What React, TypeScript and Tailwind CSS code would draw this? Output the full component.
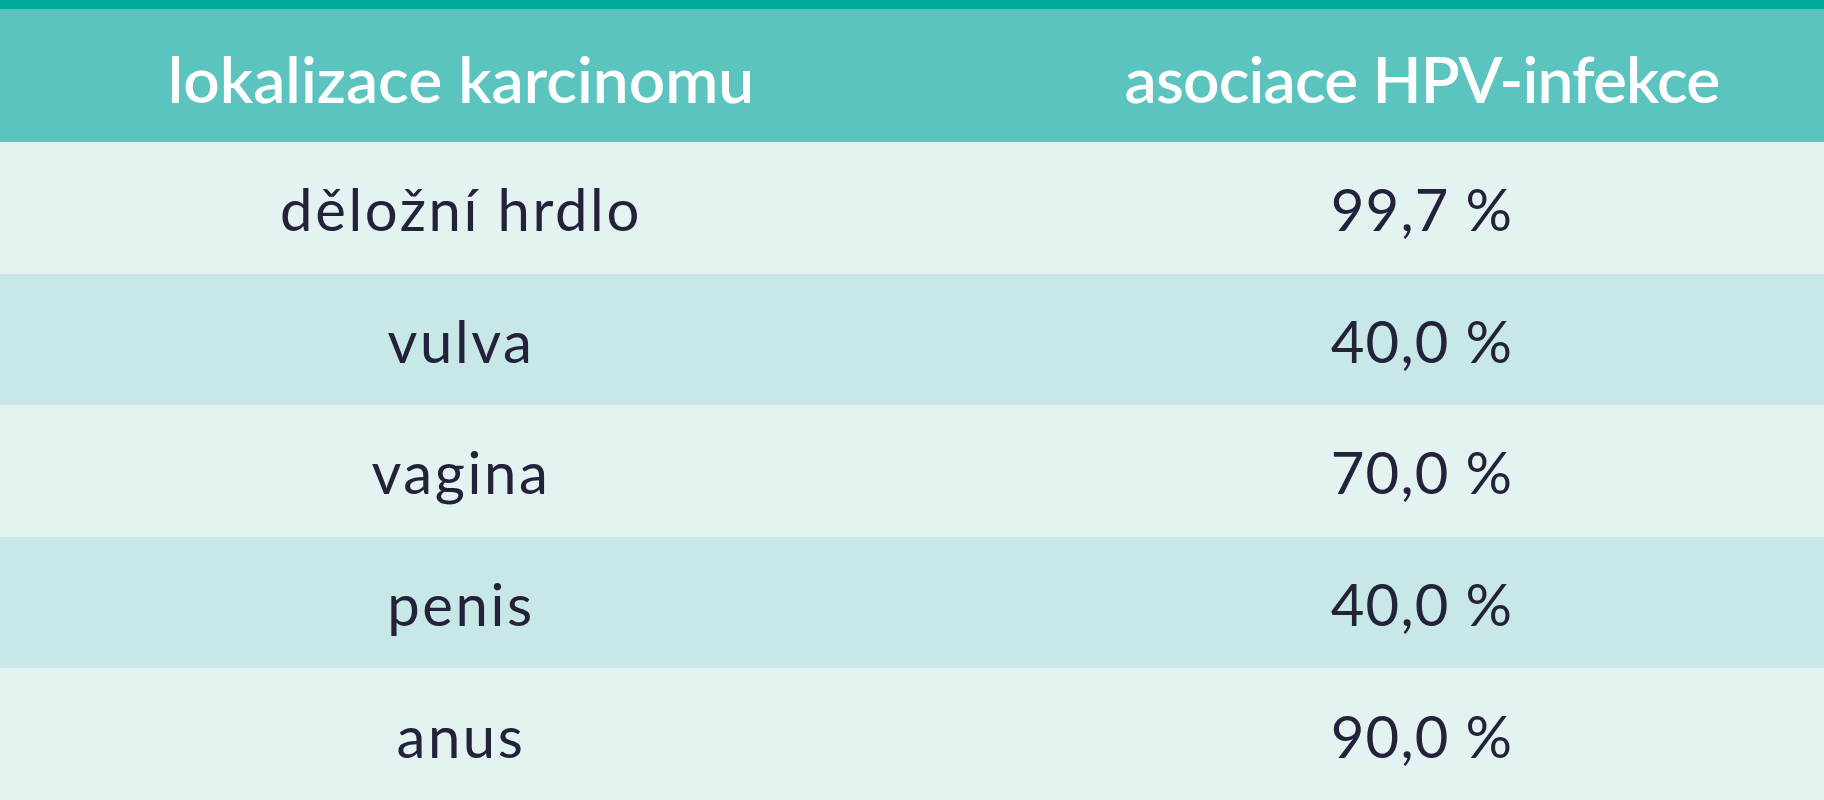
const ROWS = [
  { site: "děložní hrdlo", value: "99,7 %" },
  { site: "vulva", value: "40,0 %" },
  { site: "vagina", value: "70,0 %" },
  { site: "penis", value: "40,0 %" },
  { site: "anus", value: "90,0 %" },
]

export default function App() {
  return (
    <div className="flex h-[800px] w-[1824px] flex-col bg-[#e3f3f2] font-['Lato',sans-serif]">
      <div className="h-[9px] bg-[#00a99d]" />
      <div className="flex h-[133px] items-center bg-[#5cc4bf] pt-[6px] text-[64px] font-semibold text-white">
        <div className="w-[922px] text-center">lokalizace karcinomu</div>
        <div className="flex-1 pl-[98px] text-center tracking-[-0.013em]">asociace HPV-infekce</div>
      </div>
      {ROWS.map((row, i) => (
        <div
          key={row.site}
          className={
            i % 2 === 0
              ? "flex flex-1 items-center bg-[#e3f3f2] pt-[2px] text-[58px] text-[#24213a]"
              : "flex flex-1 items-center bg-[#c8e8e7] pt-[2px] text-[58px] text-[#24213a]"
          }
        >
          <div className="w-[922px] text-center tracking-[0.045em]">{row.site}</div>
          <div className="flex-1 pl-[98px] text-center tracking-[0.02em]">{row.value}</div>
        </div>
      ))}
    </div>
  )
}
